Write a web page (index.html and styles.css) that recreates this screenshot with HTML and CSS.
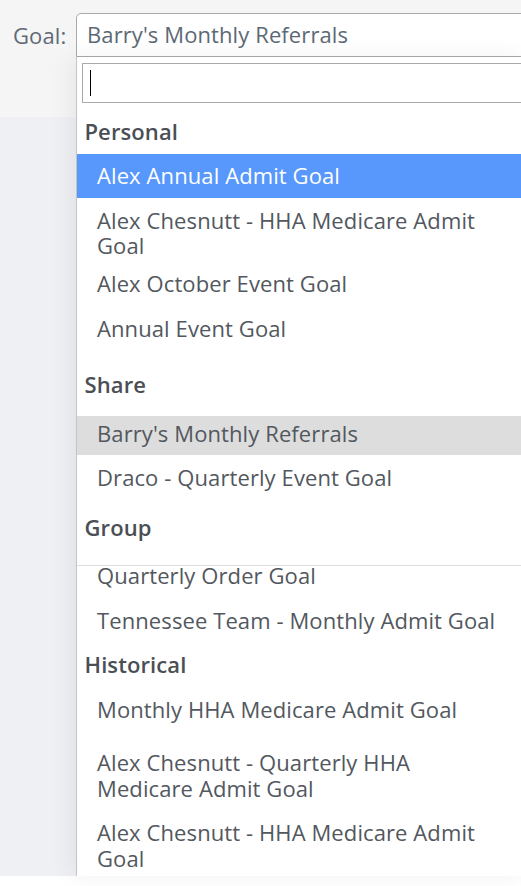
FILE: index.html
```html
<!DOCTYPE html>
<html lang="en">
<head>
<meta charset="utf-8">
<title>Goal picker</title>
<link rel="stylesheet" href="styles.css">
</head>
<body>
<div class="page">
  <header class="toolbar">
    <span class="goal-label">Goal:</span>
    <div class="select">Barry's Monthly Referrals</div>
  </header>
  <main class="content"></main>

  <div class="dropdown">
    <div class="search"><div class="search-input"><span class="caret"></span></div></div>
    <ul class="results">
      <li class="group">
        <div class="group-title">Personal</div>
        <ul class="options">
          <li class="opt opt-active">Alex Annual Admit Goal</li>
          <li class="opt opt-wrap-end">Alex Chesnutt - HHA Medicare Admit Goal</li>
          <li class="opt">Alex October Event Goal</li>
          <li class="opt">Annual Event Goal</li>
        </ul>
      </li>
      <li class="group">
        <div class="group-title group-title-spaced">Share</div>
        <ul class="options">
          <li class="opt opt-current">Barry's Monthly Referrals</li>
          <li class="opt opt-after-current">Draco - Quarterly Event Goal</li>
        </ul>
      </li>
      <li class="group">
        <div class="group-title group-title-sticky">Group</div>
        <ul class="options">
          <li class="opt opt-scrolled">Quarterly Order Goal</li>
          <li class="opt">Tennessee Team - Monthly Admit Goal</li>
        </ul>
      </li>
      <li class="group">
        <div class="group-title">Historical</div>
        <ul class="options">
          <li class="opt opt-spaced">Monthly HHA Medicare Admit Goal</li>
          <li class="opt">Alex Chesnutt - Quarterly HHA Medicare Admit Goal</li>
          <li class="opt">Alex Chesnutt - HHA Medicare Admit Goal</li>
        </ul>
      </li>
    </ul>
  </div>
</div>
</body>
</html>
```

FILE: styles.css
```css
* { box-sizing: border-box; }

html, body {
  margin: 0;
  padding: 0;
  background: #ffffff;
  overflow: hidden;
}

body {
  width: 521px;
  height: 886px;
  font-family: "Open Sans", "DejaVu Sans", sans-serif;
  font-size: 22px;
  letter-spacing: 0.1px;
}

.page {
  position: relative;
  width: 521px;
  height: 886px;
}

.toolbar {
  height: 117px;
  background: #f5f5f5;
  display: flex;
  align-items: flex-start;
  padding-top: 13px;
}

.goal-label {
  flex: none;
  margin-left: 13px;
  width: 63px;
  line-height: 44px;
  color: #5f6a75;
}

.select {
  width: 451px;
  flex: none;
  height: 44px;
  border: 1px solid #aaaaaa;
  border-radius: 5px 0 0 0;
  background: #ffffff;
  padding: 0 0 2px 10px;
  line-height: 40px;
  color: #5c6975;
  white-space: nowrap;
}

.content {
  height: 759px;
  background: #eff0f3;
}

.dropdown {
  position: absolute;
  top: 57px;
  left: 76px;
  width: 451px;
  height: 819px;
  overflow: hidden;
  background: #ffffff;
  border-left: 1px solid #c4c4c4;
  box-shadow: -6px 0 22px rgba(0, 0, 0, 0.06);
}

.search {
  padding: 6px 0 6px 5px;
}

.search-input {
  height: 40px;
  border: 1px solid #aaaaaa;
  padding: 6px 0 0 7px;
}

.caret {
  display: block;
  width: 1px;
  height: 26px;
  background: #000000;
}

.results, .options {
  list-style: none;
  margin: 0;
  padding: 0;
}

.group-title {
  padding: 9.5px 10px 9.5px 7.5px;
  line-height: 25.5px;
  font-weight: 600;
  color: #4a4f55;
}

.group-title-spaced {
  padding-top: 21px;
  padding-bottom: 18.5px;
}

.group-title-sticky {
  padding-top: 14.5px;
  padding-bottom: 25px;
  border-bottom: 1px solid #dddddd;
}

.opt {
  padding: 9.5px 22px 9.5px 20px;
  line-height: 25.5px;
  color: #52585e;
}

.opt-active {
  background: #5897fb;
  color: #ffffff;
}

.opt-wrap-end {
  padding-bottom: 3px;
}

.opt-current {
  background: #dddddd;
  padding-top: 5.5px;
  padding-bottom: 8px;
}

.opt-after-current {
  padding-top: 10.5px;
}

.opt-scrolled {
  margin-top: -3px;
  padding-top: 0;
}

.opt-spaced {
  padding-bottom: 18.5px;
}
```
